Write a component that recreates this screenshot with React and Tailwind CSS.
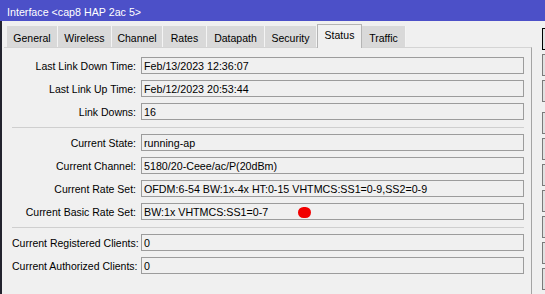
import React from 'react';

const tabs = [
  { name: 'General', w: 'w-[51px]' },
  { name: 'Wireless', w: 'w-[54px]' },
  { name: 'Channel', w: 'w-[51px]' },
  { name: 'Rates', w: 'w-[44px]' },
  { name: 'Datapath', w: 'w-[58px]' },
  { name: 'Security', w: 'w-[52px]' },
  { name: 'Status', w: 'w-[45px]', active: true },
  { name: 'Traffic', w: 'w-[44px]' },
];

const groups = [
  [
    ['Last Link Down Time:', 'Feb/13/2023 12:36:07'],
    ['Last Link Up Time:', 'Feb/12/2023 20:53:44'],
    ['Link Downs:', '16'],
  ],
  [
    ['Current State:', 'running-ap'],
    ['Current Channel:', '5180/20-Ceee/ac/P(20dBm)'],
    ['Current Rate Set:', 'OFDM:6-54 BW:1x-4x HT:0-15 VHTMCS:SS1=0-9,SS2=0-9'],
    ['Current Basic Rate Set:', 'BW:1x VHTMCS:SS1=0-7'],
  ],
  [
    ['Current Registered Clients:', '0'],
    ['Current Authorized Clients:', '0'],
  ],
];

function Field({ label, value }) {
  return (
    <div className="flex items-center h-[17px]">
      <div className="w-[124px] shrink-0 text-right whitespace-nowrap pt-[2px]">{label}</div>
      <div className="ml-[5px] w-[383px] shrink-0 h-[17px] border border-[#9c9c9c] bg-[#f0f0f0] pl-[2px] pt-[2px] whitespace-nowrap overflow-hidden leading-[13px] text-[10.7px]">
        {value}
      </div>
    </div>
  );
}

export default function App() {
  return (
    <div className="relative w-[545px] h-[294px] overflow-hidden bg-[#f0f0f0] text-black font-['Liberation_Sans',Arial,sans-serif] text-[10.5px]">
      <div className="h-[21px] bg-[#4c50c8] text-white pl-[7px] pt-[4px] flex items-center whitespace-nowrap text-[10.7px]">
        Interface &lt;cap8 HAP 2ac 5&gt;
      </div>

      <div className="flex">
        <div className="w-[532px] shrink-0 h-[273px] border-l-2 border-[#22232e] flex flex-col">
          <div className="flex items-end h-[26px] pl-[5px]">
            {tabs.map((t) =>
              t.active ? (
                <div
                  key={t.name}
                  className={`${t.w} h-[24px] -mb-px relative z-10 bg-[#f0f0f0] border-x border-t border-[#b4b4b4] flex items-center justify-center pb-[1px]`}
                >
                  {t.name}
                </div>
              ) : (
                <div
                  key={t.name}
                  className={`${t.w} h-[21px] bg-[#d9d9d9] border-r border-[#f4f4f4] flex items-center justify-center pt-[4px]`}
                >
                  {t.name}
                </div>
              )
            )}
          </div>
          <div className="flex-1 ml-[2px] border-t border-r border-t-[#d4d4d4] border-r-[#a4a4a4] pt-[9px] pl-[8px]">
            {groups.map((g, gi) => (
              <div key={gi}>
                {gi > 0 && <div className="w-[512px] h-px bg-[#cfcfcf] mt-[7px] mb-[6px]" />}
                <div className="flex flex-col gap-[6px]">
                  {g.map(([l, v]) => (
                    <Field key={l} label={l} value={v} />
                  ))}
                </div>
              </div>
            ))}
          </div>
        </div>

        <div className="ml-[10px] shrink-0 pt-[7px] flex flex-col gap-[4px]">
          <div className="w-[80px] h-[22px] bg-[#e1e1e1] border border-black" />
          <div className="w-[80px] h-[22px] bg-[#e1e1e1] border border-[#7a7a7a]" />
          <div className="w-[80px] h-[22px] bg-[#e1e1e1] border border-[#7a7a7a]" />
          <div className="w-[80px] h-[22px] bg-[#e1e1e1] border border-[#7a7a7a] mt-[6px]" />
          <div className="w-[80px] h-[22px] bg-[#e1e1e1] border border-[#7a7a7a]" />
          <div className="w-[80px] h-[22px] bg-[#e1e1e1] border border-[#7a7a7a]" />
          <div className="w-[80px] h-[22px] bg-[#e1e1e1] border border-[#7a7a7a]" />
          <div className="w-[80px] h-[22px] bg-[#e1e1e1] border border-[#7a7a7a]" />
          <div className="w-[80px] h-[22px] bg-[#e1e1e1] border border-[#7a7a7a]" />
          <div className="w-[80px] h-[22px] bg-[#e1e1e1] border border-[#7a7a7a]" />
        </div>
      </div>

      <div className="absolute left-[298px] top-[207px] w-[13px] h-[11px] rounded-full bg-[#f20000]" />
    </div>
  );
}
